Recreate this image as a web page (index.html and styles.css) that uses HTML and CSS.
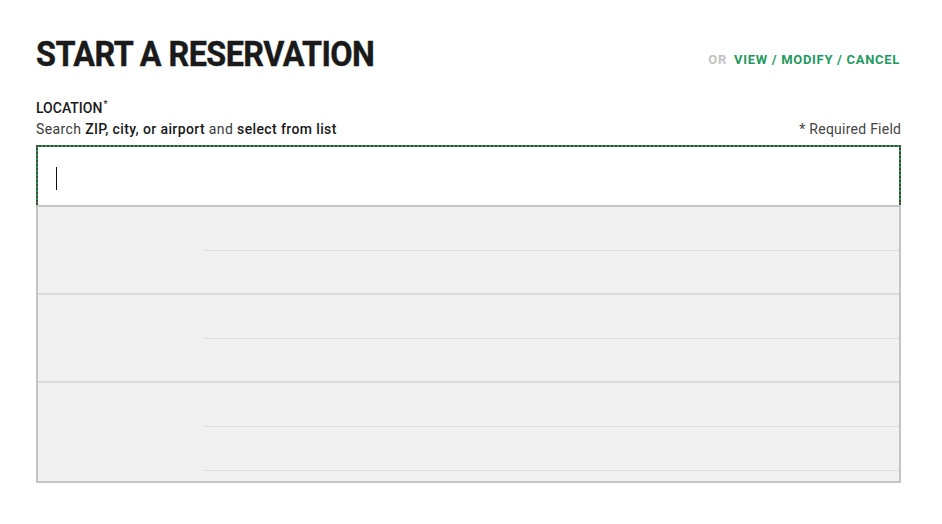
FILE: index.html
```html
<!DOCTYPE html>
<html lang="en">
<head>
<meta charset="utf-8">
<title>Start a Reservation</title>
<link rel="stylesheet" href="styles.css">
</head>
<body>
<div class="page">
  <header class="top">
    <h1 class="title">START A RESERVATION</h1>
    <div class="alt"><span class="or">OR</span><a class="alt-link" href="#">VIEW / MODIFY / CANCEL</a></div>
  </header>
  <div class="field">
    <div class="label">LOCATION<span class="star">*</span></div>
    <div class="hint-row">
      <p class="hint">Search <b>ZIP, city, or airport</b> and <b>select from list</b></p>
      <span class="req">* Required Field</span>
    </div>
    <div class="input"><span class="caret"></span></div>
    <div class="dropdown">
      <div class="group">
        <div class="g-left"></div>
        <div class="g-items"><div class="item"></div><div class="item"></div></div>
      </div>
      <div class="group">
        <div class="g-left"></div>
        <div class="g-items"><div class="item"></div><div class="item"></div></div>
      </div>
      <div class="group">
        <div class="g-left"></div>
        <div class="g-items"><div class="item"></div><div class="item"></div><div class="item"></div></div>
      </div>
    </div>
  </div>
</div>
</body>
</html>
```
FILE: styles.css
```css
html, body {
  margin: 0;
  background: #ffffff;
}
body {
  font-family: Roboto, "Liberation Sans", Arial, sans-serif;
  color: #1a1a1a;
}
.page {
  width: 865px;
  margin-left: 36px;
  padding-top: 35px;
}
.top {
  display: flex;
  justify-content: space-between;
  align-items: flex-start;
}
.title {
  margin: 0;
  font-size: 35px;
  line-height: 40px;
  font-weight: 700;
  letter-spacing: -0.6px;
  color: #1a1a1a;
  transform: scaleX(0.925);
  transform-origin: left center;
  white-space: nowrap;
  -webkit-text-stroke: 0.4px #1a1a1a;
}
.alt {
  padding-top: 17px;
  padding-right: 1px;
  font-size: 13px;
  line-height: 16px;
  font-weight: 700;
  letter-spacing: 0.7px;
  white-space: nowrap;
}
.or {
  color: #c2c2c2;
  margin-right: 7px;
}
.alt-link {
  color: #1f9a5e;
  text-decoration: none;
}
.field {
  margin-top: 25px;
}
.label {
  font-size: 14px;
  line-height: 16px;
  font-weight: 500;
  color: #1a1a1a;
}
.star {
  font-size: 9px;
  vertical-align: top;
  line-height: 9px;
  margin-left: 1px;
}
.hint-row {
  display: flex;
  justify-content: space-between;
  margin-top: 5px;
  font-size: 14px;
  line-height: 17px;
  letter-spacing: 0.25px;
}
.hint {
  margin: 0;
  color: #3a3a3a;
  letter-spacing: 0.38px;
}
.hint b {
  font-weight: 500;
  color: #1a1a1a;
}
.req {
  color: #444444;
  margin-right: -0.25px;
}
.input {
  margin-top: 7px;
  height: 60px;
  box-sizing: border-box;
  border: 2px dotted #4f4030;
  border-bottom: 0;
  background: linear-gradient(#ffffff, #ffffff) padding-box, #1a9a5c border-box;
  padding: 20px 0 0 18px;
}
.caret {
  display: block;
  width: 1px;
  height: 23px;
  background: #111111;
}
.dropdown {
  height: 278px;
  box-sizing: border-box;
  border: 2px solid #c4c4c4;
  background: #f1f1f1;
  overflow: hidden;
}
.group {
  display: flex;
  border-bottom: 2px solid #dcdcdc;
}
.g-left {
  width: 165px;
  flex: none;
}
.g-items {
  flex: 1;
}
.item {
  height: 43px;
  border-bottom: 1px solid #dedede;
}
.item:last-child {
  height: 42px;
  border-bottom: 0;
}
.group:last-child .item:last-child {
  height: 43px;
  border-bottom: 1px solid #dedede;
}
```
